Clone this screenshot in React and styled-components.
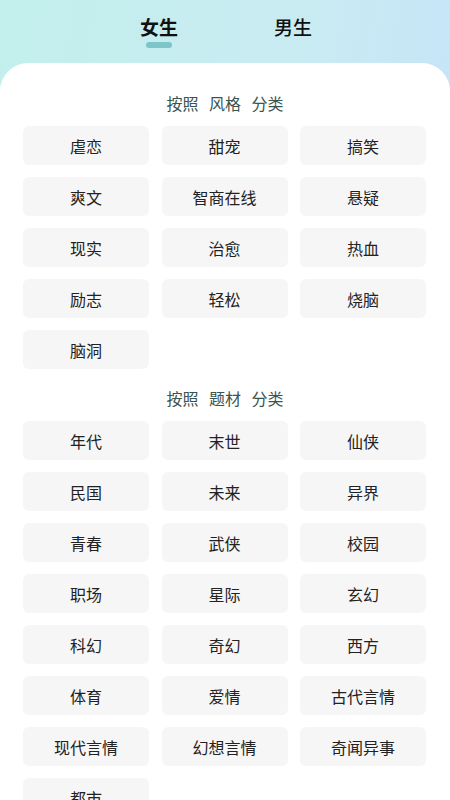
import React from 'react';
import styled, { createGlobalStyle } from 'styled-components';

const GlobalStyle = createGlobalStyle`
  html, body {
    margin: 0;
    padding: 0;
    background: #ffffff;
  }
  body {
    font-family: "Noto Sans CJK SC", "Noto Sans", sans-serif;
  }
`;

const Page = styled.div`
  width: 450px;
  height: 800px;
  overflow: hidden;
  display: flex;
  flex-direction: column;
  background: linear-gradient(100deg, #c2efec 0%, #c9ebf3 55%, #c3dffa 100%);
`;

const Tabs = styled.div`
  height: 63px;
  flex-shrink: 0;
  display: flex;
  justify-content: center;
  gap: 96px;
  padding-left: 2px;
  box-sizing: border-box;
`;

const Tab = styled.div`
  display: flex;
  flex-direction: column;
  align-items: center;
  padding-top: 13px;
`;

const TabLabel = styled.span`
  font-size: 19px;
  line-height: 28px;
  font-weight: ${p => (p.active ? 700 : 500)};
  color: #111;
`;

const Indicator = styled.div`
  width: 26px;
  height: 6px;
  margin-top: 1px;
  border-radius: 3px;
  background: ${p => (p.active ? '#7ec5c9' : 'transparent')};
`;

const Card = styled.div`
  flex: 1;
  min-height: 0;
  background: #fff;
  border-radius: 28px 28px 0 0;
  padding-top: 27px;
`;

const SectionTitle = styled.div`
  text-align: center;
  font-size: 16px;
  line-height: 26px;
  color: #3a544f;
  word-spacing: 7px;
  white-space: pre;
  margin-bottom: ${p => p.gapBelow}px;
`;

const Grid = styled.div`
  display: grid;
  grid-template-columns: repeat(3, 1fr);
  column-gap: 12.5px;
  row-gap: 12px;
  padding: 0 24px 0 23px;
  margin-bottom: 16px;
`;

const Chip = styled.div`
  height: 39px;
  border-radius: 6px;
  background: #f6f6f6;
  display: flex;
  align-items: center;
  justify-content: center;
  font-size: 16px;
  color: #222;
`;

const styles = ['虐恋', '甜宠', '搞笑', '爽文', '智商在线', '悬疑', '现实', '治愈', '热血', '励志', '轻松', '烧脑', '脑洞'];
const themes = ['年代', '末世', '仙侠', '民国', '未来', '异界', '青春', '武侠', '校园', '职场', '星际', '玄幻', '科幻', '奇幻', '西方', '体育', '爱情', '古代言情', '现代言情', '幻想言情', '奇闻异事', '都市'];

export default function App() {
  return (
    <>
      <GlobalStyle />
      <Page>
        <Tabs>
          <Tab>
            <TabLabel active>女生</TabLabel>
            <Indicator active />
          </Tab>
          <Tab>
            <TabLabel>男生</TabLabel>
            <Indicator />
          </Tab>
        </Tabs>
        <Card>
          <SectionTitle gapBelow={10}>按照 风格 分类</SectionTitle>
          <Grid>
            {styles.map(s => <Chip key={s}>{s}</Chip>)}
          </Grid>
          <SectionTitle gapBelow={10}>按照 题材 分类</SectionTitle>
          <Grid>
            {themes.map(s => <Chip key={s}>{s}</Chip>)}
          </Grid>
        </Card>
      </Page>
    </>
  );
}
